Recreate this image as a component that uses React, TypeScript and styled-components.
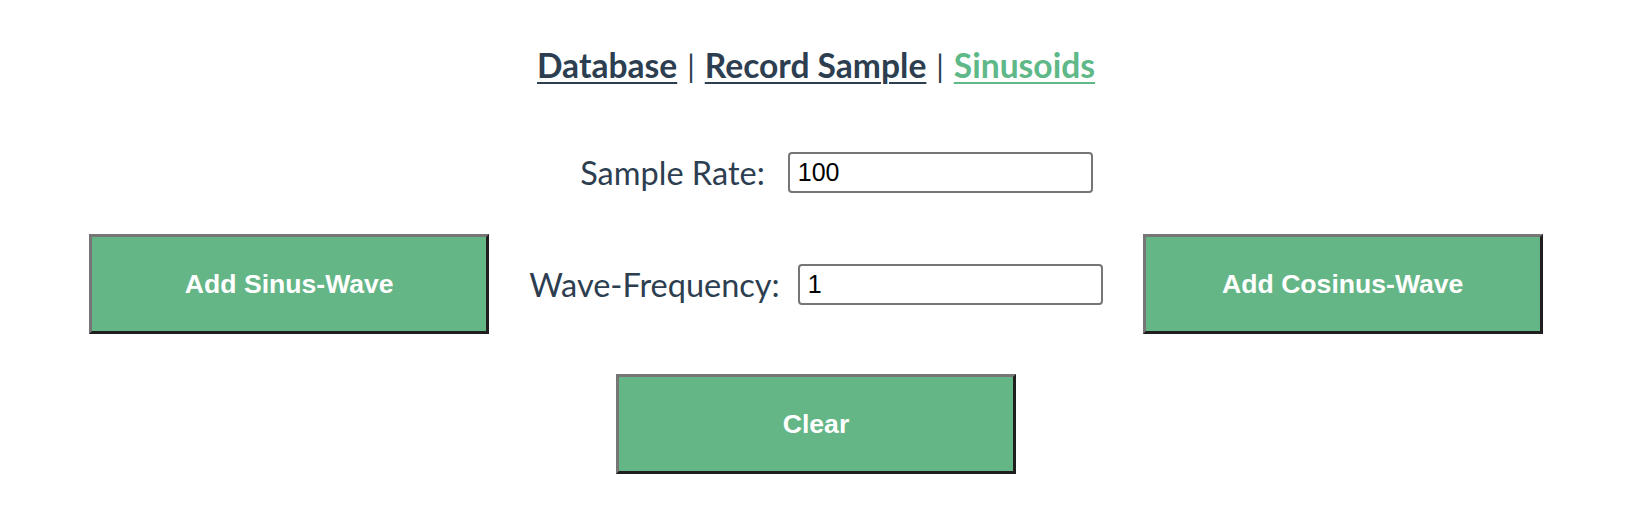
import React, { useState } from "react";
import styled, { createGlobalStyle } from "styled-components";

const GlobalStyle = createGlobalStyle`
  html, body {
    margin: 0;
    padding: 0;
    background: #ffffff;
  }
  body {
    font-family: Lato, "Open Sans", Arial, sans-serif;
    color: #2c3e50;
    -webkit-font-smoothing: antialiased;
  }
`;

const Page = styled.div`
  display: flex;
  flex-direction: column;
  align-items: center;
  width: 1628px;
  padding-left: 4px;
  box-sizing: border-box;
`;

const Nav = styled.nav`
  display: flex;
  align-items: baseline;
  justify-content: center;
  padding-top: 47px;
  height: 95px;
  box-sizing: border-box;
  font-size: 33.6px;
  line-height: 36px;
`;

const NavLink = styled.a<{ $active?: boolean }>`
  font-weight: 700;
  color: ${(p) => (p.$active ? "#5fb888" : "#2c3e50")};
  text-decoration: underline;
  text-underline-offset: 4px;
  text-decoration-thickness: 2px;
  cursor: pointer;
`;

const Sep = styled.span`
  color: #2c3e50;
  font-weight: 400;
  font-size: 30px;
  margin: 0 10px;
`;

const FieldRow = styled.div<{ $shift?: number }>`
  display: flex;
  align-items: center;
  justify-content: center;
  padding-left: ${(p) => p.$shift ?? 0}px;
  margin-top: 57px;
`;

const ButtonRow = styled.div`
  display: flex;
  align-items: center;
  justify-content: center;
  margin-top: 41px;
`;

const Field = styled.label<{ $gap: number }>`
  display: flex;
  align-items: center;
  gap: ${(p) => p.$gap}px;
  margin: 0 40px 0 40px;
`;

const Label = styled.span`
  font-size: 32.5px;
  color: #2c3e50;
`;

const Input = styled.input`
  width: 305px;
  height: 41px;
  box-sizing: border-box;
  border: 2px solid #767676;
  border-radius: 4px;
  padding: 0 8px;
  font-family: "Liberation Sans", Arial, sans-serif;
  font-size: 25px;
  color: #000;
  background: #fff;
  outline: none;
`;

const GreenButton = styled.button`
  width: 400px;
  height: 100px;
  box-sizing: border-box;
  background: #64b687;
  border-style: solid;
  border-width: 3px;
  border-color: #767676 #1f1f1f #1f1f1f #767676;
  color: #ffffff;
  font-family: "Liberation Sans", Arial, sans-serif;
  font-weight: 700;
  font-size: 26.6px;
  cursor: pointer;
  padding: 0;
`;

const ClearRow = styled.div`
  display: flex;
  justify-content: center;
  margin-top: 40px;
`;

export default function App() {
  const [rate, setRate] = useState("100");
  const [freq, setFreq] = useState("1");
  return (
    <>
      <GlobalStyle />
      <Page>
        <Nav>
          <NavLink>Database</NavLink>
          <Sep>|</Sep>
          <NavLink>Record Sample</NavLink>
          <Sep>|</Sep>
          <NavLink $active>Sinusoids</NavLink>
        </Nav>
        <FieldRow $shift={41}>
          <Field $gap={23}>
            <Label>Sample Rate:</Label>
            <Input value={rate} onChange={(e) => setRate(e.target.value)} />
          </Field>
        </FieldRow>
        <ButtonRow>
          <GreenButton>Add Sinus-Wave</GreenButton>
          <Field $gap={18}>
            <Label>Wave-Frequency:</Label>
            <Input value={freq} onChange={(e) => setFreq(e.target.value)} />
          </Field>
          <GreenButton>Add Cosinus-Wave</GreenButton>
        </ButtonRow>
        <ClearRow>
          <GreenButton>Clear</GreenButton>
        </ClearRow>
      </Page>
    </>
  );
}
